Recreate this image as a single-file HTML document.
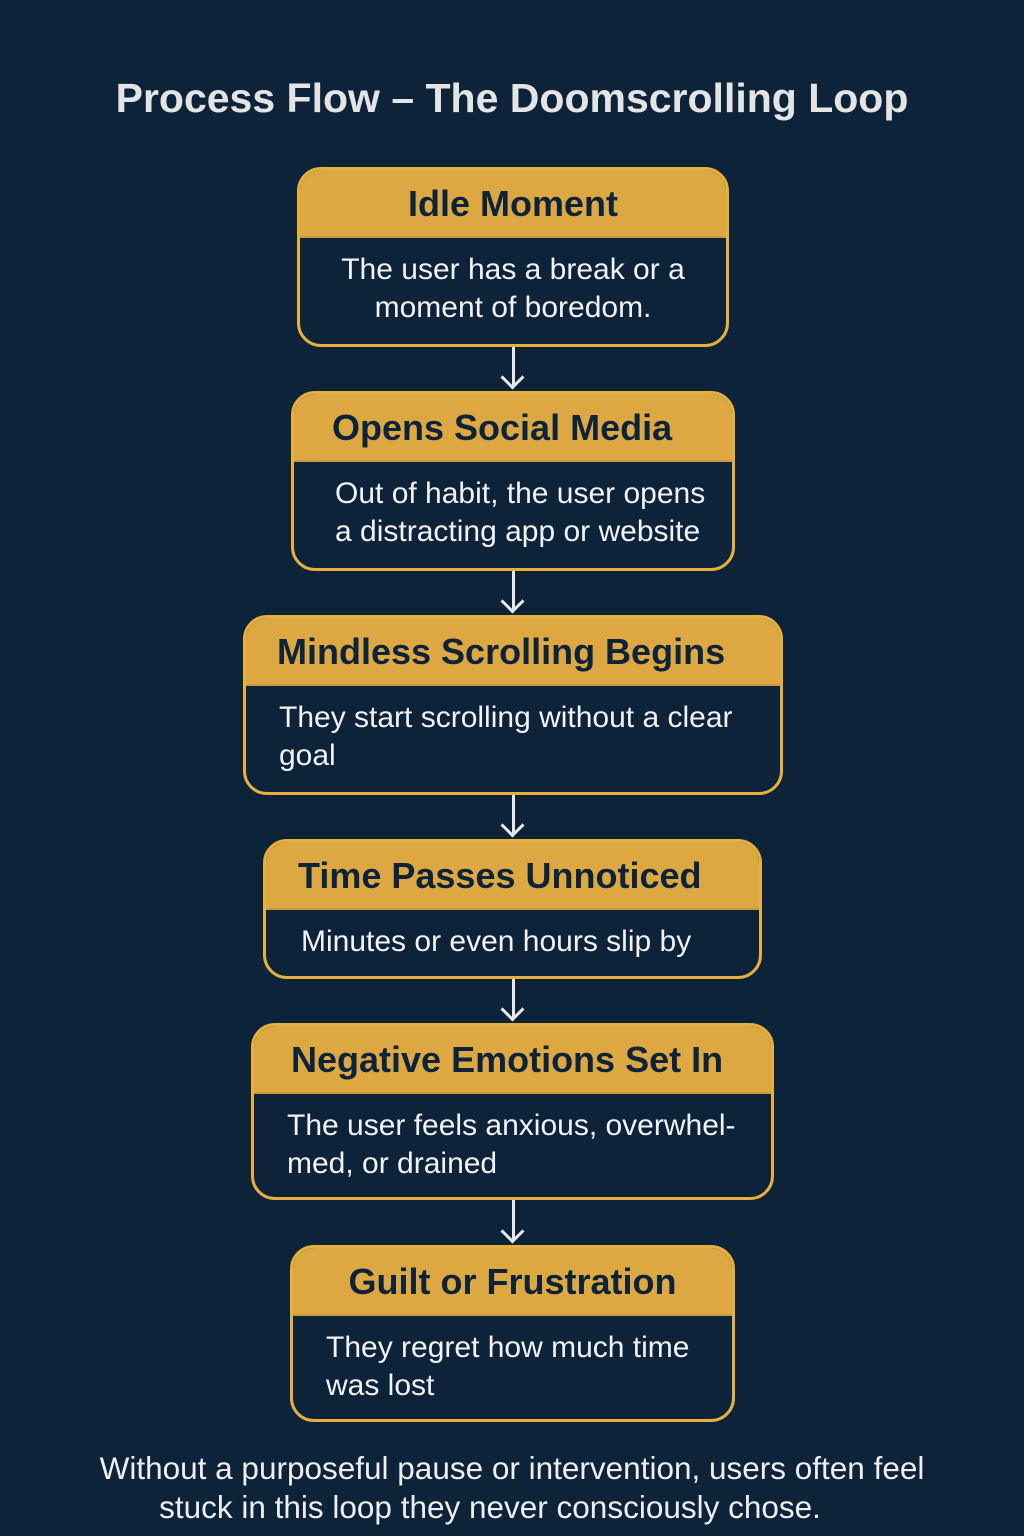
<!DOCTYPE html>
<html><head><style>
body{margin:0;width:1024px;height:1536px;background:#0d233a;position:relative;font-family:"Liberation Sans",sans-serif;overflow:hidden}
h1{position:absolute;top:75px;left:0;width:1024px;text-align:center;margin:0;color:#e4e4e4;font-size:41px;font-weight:bold}
.b{position:absolute;border:3px solid #e6b03c;border-radius:24px;background:#0d233a;box-sizing:border-box;overflow:hidden}
.h{background:#dda842;height:66px;line-height:68px;color:#0d233a;font-weight:bold;font-size:36px;text-align:center;border-bottom:2px solid #c99a3c;white-space:nowrap}
.t{color:#f2f2f2;font-size:30px;line-height:38px;padding:13px 20px 0 33px}
.c{text-align:center}
.a{position:absolute;left:512px;width:3px;background:#e8e8e8}
.a:after{content:"";position:absolute;left:-8px;bottom:1px;width:14px;height:14px;border-right:3px solid #e8e8e8;border-bottom:3px solid #e8e8e8;transform:rotate(45deg)}
.f{position:absolute;top:1449px;left:0;width:1024px;text-align:center;color:#eee;font-size:31.5px;line-height:39px;white-space:nowrap}
</style></head><body>
<h1>Process Flow – The Doomscrolling Loop</h1>
<div class="b" style="left:297px;top:167px;width:432px;height:180px"><div class="h">Idle Moment</div><div class="t c" style="padding:13px 10px 0">The user has a break or a moment of boredom.</div></div>
<div class="a" style="top:347px;height:40px"></div>
<div class="b" style="left:291px;top:391px;width:444px;height:180px"><div class="h" style="text-align:left;padding-left:38px">Opens Social Media</div><div class="t" style="padding-left:41px;padding-right:10px">Out of habit, the user opens a distracting app or website</div></div>
<div class="a" style="top:571px;height:40px"></div>
<div class="b" style="left:243px;top:615px;width:540px;height:180px"><div class="h" style="text-align:left;padding-left:31px">Mindless Scrolling Begins</div><div class="t">They start scrolling without a clear goal</div></div>
<div class="a" style="top:795px;height:40px"></div>
<div class="b" style="left:263px;top:839px;width:499px;height:140px"><div class="h" style="text-align:left;padding-left:32px">Time Passes Unnoticed</div><div class="t" style="padding-left:35px">Minutes or even hours slip by</div></div>
<div class="a" style="top:979px;height:40px"></div>
<div class="b" style="left:251px;top:1023px;width:523px;height:177px"><div class="h" style="text-align:left;padding-left:37px">Negative Emotions Set In</div><div class="t" style="padding-right:10px">The user feels anxious, overwhel-med, or drained</div></div>
<div class="a" style="top:1200px;height:41px"></div>
<div class="b" style="left:290px;top:1245px;width:445px;height:177px"><div class="h">Guilt or Frustration</div><div class="t">They regret how much time was lost</div></div>
<div class="f">Without a purposeful pause or intervention, users often feel<br><span style="position:relative;left:-22px">stuck in this loop they never consciously chose.</span></div>
</body></html>
